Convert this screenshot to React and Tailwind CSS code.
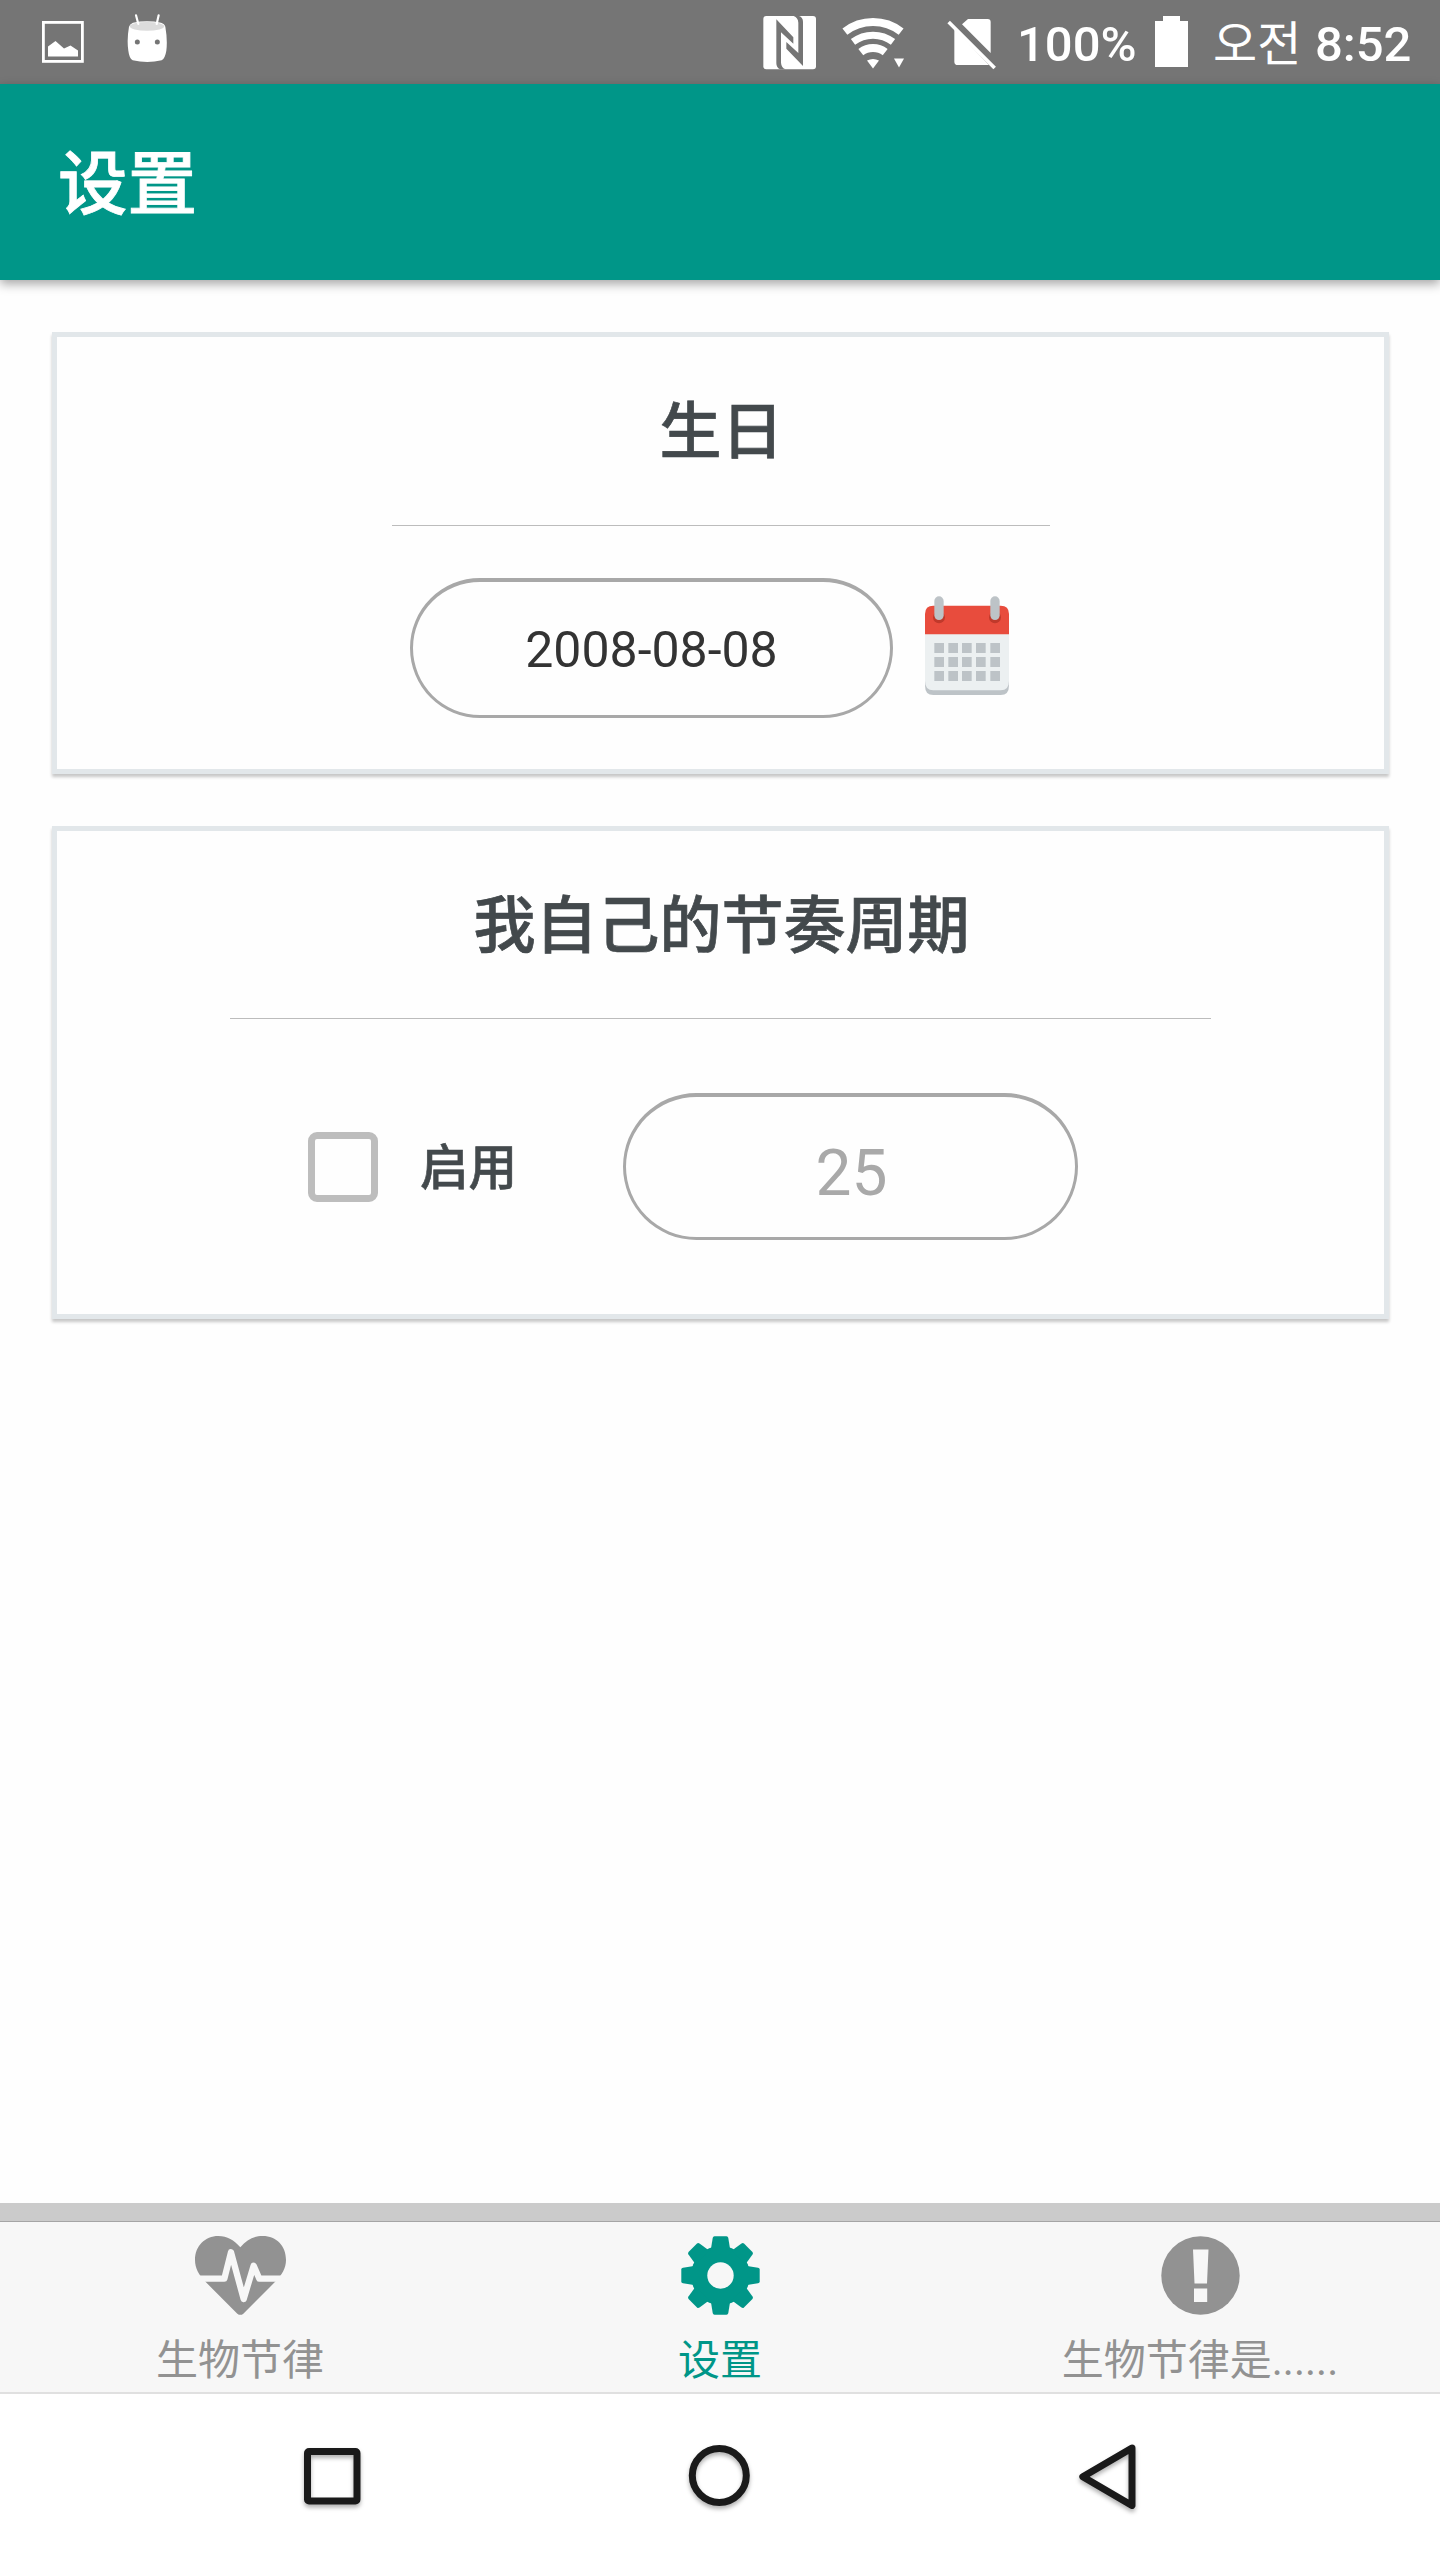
const latin = "font-[Roboto,'Noto_Sans_CJK_KR',sans-serif]";
const hanzi = "font-['Noto_Sans_CJK_SC',sans-serif]";

function StatusBar() {
  return (
    <div className="flex h-[84px] items-start bg-[#757575] text-white">
      <svg className="mt-[21px] ml-[42px] h-[42px] w-[42px] shrink-0" viewBox="0 0 42 42">
        <rect x="1.4" y="1.4" width="39" height="39" fill="none" stroke="#fff" strokeWidth="2.8" />
        <path d="M6 35.5V25.5L13.5 20L22 27.5L28.5 24.5L36 29.5V35.5Z" fill="#fff" />
      </svg>
      <svg className="mt-[14px] ml-[43px] h-[49px] w-[41px] shrink-0" viewBox="380 42 123 147">
        <path d="M386 80Q388 72 398 68Q440 60 482 68Q493 71 495 80Q502 120 498 152Q494 176 484 181Q441 191 397 181Q387 176 384 152Q379 120 386 80Z" fill="#fff" />
        <ellipse cx="440" cy="79" rx="52" ry="13" fill="#dcdcdc" />
        <path d="M407 46L414 72M475 46L469 72" stroke="#fff" strokeWidth="6.5" strokeLinecap="round" />
        <circle cx="411" cy="126" r="7.5" fill="#757575" />
        <circle cx="471" cy="126" r="7.5" fill="#757575" />
      </svg>
      <svg className="mt-[16px] ml-[595px] h-[54px] w-[54px] shrink-0" viewBox="69 48 162 162">
        <rect x="70" y="48" width="158" height="160" rx="9" fill="#fff" />
        <path d="M109 58L160 112V131L123 97V188Q124 203 137 208H121Q109 204 109 190Z" fill="#757575" />
        <path d="M189 198L139 146V126L175 159V68Q174 53 161 48H177Q189 52 189 66Z" fill="#757575" />
      </svg>
      <svg className="mt-[17px] ml-[25px] h-[52px] w-[64px] shrink-0" viewBox="842 17 64 52">
        <g fill="none" stroke="#fff">
          <path d="M844.9 31.7A46 46 0 0 1 901.1 31.7" strokeWidth="8" />
          <path d="M853 41.9A33 33 0 0 1 893 41.9" strokeWidth="7" />
          <path d="M860.8 52.2A20 20 0 0 1 885.2 52.2" strokeWidth="8" />
        </g>
        <path d="M867 60.5Q873 57.5 879 60.5L873 68.5Z" fill="#fff" />
        <path d="M894 58.5H904L899 67.5Z" fill="#fff" />
      </svg>
      <svg className="mt-[18px] ml-[41px] h-[53px] w-[51px] shrink-0" viewBox="622 54 153 159">
        <path d="M667 73L685 57H744Q753 57 753 66V159ZM644 86L748 195H655Q644 195 644 185Z" fill="#fff" />
        <path d="M627 66L765 204" stroke="#fff" strokeWidth="11" />
      </svg>
      <div className={`${latin} mt-[15px] ml-[19px] w-[131px] text-[49px] leading-[60px] font-medium whitespace-nowrap`}>100%</div>
      <svg className="mt-[16px] ml-[7px] h-[51px] w-[33px] shrink-0" viewBox="0 0 33 51">
        <path d="M8 0H25V5H33V51H0V5H8Z" fill="#fff" />
      </svg>
      <div className={`${latin} mt-[15px] ml-[25px] flex text-[49px] leading-[60px] whitespace-nowrap`}>
        <span className="w-[102px] text-[48px]">오전</span>
        <span className="font-medium">8:52</span>
      </div>
    </div>
  );
}

function CalendarIcon() {
  const rows = [231, 273, 315];
  const cols = [103, 145, 186, 228, 271];
  return (
    <svg className="mb-[6px] h-[101px] w-[86px]" viewBox="72 75 258 303">
      <path d="M75 180H327V347Q327 375 302 375H100Q75 375 75 347Z" fill="#bdc3c7" />
      <path d="M75 180H327V333Q327 361 302 361H100Q75 361 75 333Z" fill="#ecf0f1" />
      <path d="M75 193V132Q75 107 100 107H302Q327 107 327 132V193Z" fill="#e84c3d" />
      <circle cx="117" cy="142" r="18" fill="#c0392b" />
      <circle cx="285" cy="142" r="18" fill="#c0392b" />
      <rect x="103" y="79" width="28" height="71" rx="14" fill="#bdc3c7" />
      <rect x="271" y="79" width="28" height="71" rx="14" fill="#bdc3c7" />
      {rows.map((y) => cols.map((x) => <rect key={`${x}-${y}`} x={x} y={y - 12} width="29" height="30" fill="#bdc3c7" />))}
    </svg>
  );
}

function HeartIcon() {
  return (
    <svg className="h-[79px] w-[91px]" viewBox="195 138 273 237">
      <path d="M331 172C350 150 370 138 398 138C440 138 468 168 468 210C468 235 455 255 437 274L340 371Q331 378 322 371L225 274C207 255 195 235 195 210C195 168 225 138 265 138C292 138 312 150 331 172Z" fill="#929292" />
      <path d="M190 266H283L303 187L341 327L371 227L388 266H475" fill="none" stroke="#f7f7f7" strokeWidth="19" strokeLinejoin="round" />
    </svg>
  );
}

function GearIcon() {
  return (
    <svg className="h-[79px] w-[79px]" viewBox="-39.5 -39.5 79 79">
      <g fill="#009688">
        <circle r="29.5" />
        {[0, 45, 90, 135, 180, 225, 270, 315].map((a) => (
          <path key={a} transform={`rotate(${a})`} d="M-9.8 -25L-7.8 -37.5Q-7.5 -39.2 -6 -39.2H6Q7.5 -39.2 7.8 -37.5L9.8 -25Z" />
        ))}
      </g>
      <circle r="13.2" fill="#f7f7f7" />
    </svg>
  );
}

function AlertIcon() {
  return (
    <svg className="h-[79px] w-[79px]" viewBox="0 0 79 79">
      <circle cx="39.5" cy="39.5" r="39.2" fill="#929292" />
      <path d="M32 13.5H47.5L46 47.5H33.5ZM33 52.5H46.2V66H33Z" fill="#f7f7f7" />
    </svg>
  );
}

function Tab({ icon, label, color }) {
  return (
    <div className="flex flex-1 flex-col items-center pt-[14px]">
      {icon}
      <div className={`font-[Roboto,'Noto_Sans_CJK_SC',sans-serif] ${color} mt-[16px] text-[42px] leading-[60px] whitespace-nowrap`}>{label}</div>
    </div>
  );
}

const card = "flex flex-col items-center border-[5px] border-[#e2e7ea] bg-[#fefefe] shadow-[0_3px_3px_rgba(0,0,0,0.22)]";
const heading = "mt-[45px] ml-[2px] text-[62px] leading-[90px] font-medium text-[#43494c] [-webkit-text-stroke:0.7px_#43494c]";

export default function App() {
  return (
    <div className="flex h-[2560px] w-[1440px] flex-col overflow-hidden bg-[#fefefe]">
      <StatusBar />
      <header className="flex h-[196px] items-center bg-[#009688] pb-[6px] pl-[58px] shadow-[0_4px_10px_rgba(0,0,0,0.35)]">
        <h1 className={`${hanzi} text-[69.5px] leading-[100px] font-medium text-white [-webkit-text-stroke:0.8px_white]`}>设置</h1>
      </header>

      <main className="flex flex-1 flex-col pt-[52px] pr-[51px] pl-[52px]">
        <section className={`${card} h-[442px]`}>
          <h2 className={`${hanzi} ${heading}`}>生日</h2>
          <div className="mt-[53px] h-px w-[658px] bg-[#bcbcbc]" />
          <div className="mt-[52px] mr-[21px] flex w-[600px] items-center justify-between">
            <div className={`${latin} flex h-[140px] w-[483px] items-center justify-center rounded-full border-[3px] border-t-4 border-[#a8a8a8] pt-[3px] text-[50px] text-[#333]`}>2008-08-08</div>
            <CalendarIcon />
          </div>
        </section>

        <section className={`${card} mt-[52px] h-[493px]`}>
          <h2 className={`${hanzi} ${heading}`}>我自己的节奏周期</h2>
          <div className="mt-[52px] h-px w-[981px] bg-[#bcbcbc]" />
          <div className="mt-[74px] mr-[55px] flex items-center">
            <div className="h-[70px] w-[70px] rounded-[9px] border-[7px] border-[#bdbdbd]" />
            <div className={`${hanzi} mb-[5px] ml-[42px] w-[203px] text-[48.5px] leading-[70px] font-medium text-[#43494c] [-webkit-text-stroke:0.6px_#43494c]`}>启用</div>
            <div className={`${latin} flex h-[147px] w-[455px] items-center justify-center rounded-full border-[3px] border-t-4 border-[#a8a8a8] pt-[14px] pl-[2px] text-[64px] text-[#a9a9a9]`}>25</div>
          </div>
        </section>
      </main>

      <div className="h-[19px] border-b border-[#a5a5a5] bg-[#cbcbcb]" />
      <nav className="flex h-[172px] border-b-2 border-[#e0e0e0] bg-[#f7f7f7]">
        <Tab icon={<HeartIcon />} label="生物节律" color="text-[#929292]" />
        <Tab icon={<GearIcon />} label="设置" color="text-[#009688]" />
        <Tab icon={<AlertIcon />} label="生物节律是......" color="text-[#929292]" />
      </nav>

      <div className="flex h-[166px] items-start bg-white pt-[48px] pl-[300px]">
        <svg className="h-[70px] w-[65px] drop-shadow-[0_3px_2px_rgba(0,0,0,0.3)]" viewBox="0 0 65 70">
          <rect x="7.5" y="9.5" width="49.5" height="49.5" rx="1.5" fill="none" stroke="#1a1a1a" strokeWidth="7" />
        </svg>
        <svg className="ml-[320px] h-[70px] w-[70px] drop-shadow-[0_3px_2px_rgba(0,0,0,0.3)]" viewBox="0 0 70 70">
          <circle cx="34.3" cy="33.5" r="27" fill="none" stroke="#1a1a1a" strokeWidth="7" />
        </svg>
        <svg className="ml-[320px] h-[74px] w-[70px] drop-shadow-[0_3px_2px_rgba(0,0,0,0.3)]" viewBox="0 0 70 74">
          <path d="M57 6L7.8 34.7L57 63.5Z" fill="none" stroke="#1a1a1a" strokeWidth="7" strokeLinejoin="round" />
        </svg>
      </div>
    </div>
  );
}
